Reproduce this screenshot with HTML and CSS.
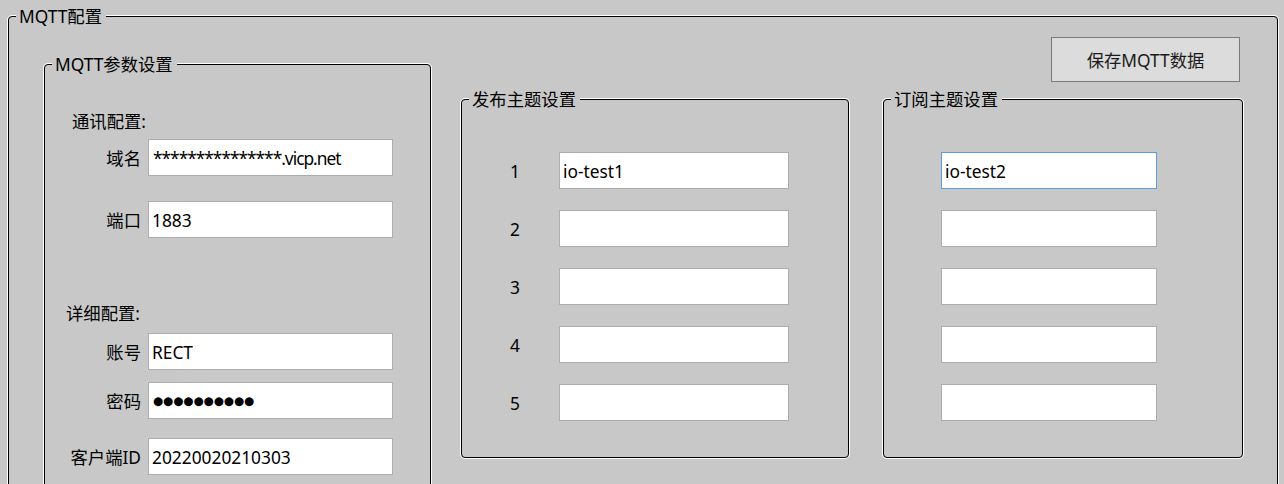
FILE: index.html
```html
<!DOCTYPE html>
<html lang="zh-CN">
<head>
<meta charset="utf-8">
<title>MQTT配置</title>
<link rel="stylesheet" href="styles.css">
</head>
<body>
<div class="window">
  <section class="group outer">
    <div class="legend">MQTT配置</div>
    <div class="outer-body">
      <section class="group params">
        <div class="legend">MQTT参数设置</div>
        <div class="heading h-comm">通讯配置:</div>
        <div class="field f-domain"><label>域名</label><input class="input domain" value="***************.vicp.net" readonly></div>
        <div class="field f-port"><label>端口</label><input class="input" value="1883" readonly></div>
        <div class="heading h-detail">详细配置:</div>
        <div class="field f-user"><label>账号</label><input class="input" value="RECT" readonly></div>
        <div class="field f-pwd"><label>密码</label><input class="input pwd" value="●●●●●●●●●●" readonly></div>
        <div class="field f-client"><label>客户端ID</label><input class="input" value="20220020210303" readonly></div>
      </section>
      <div class="right">
        <div class="toolbar"><button class="btn" type="button">保存MQTT数据</button></div>
        <div class="topics">
          <section class="group publish">
            <div class="legend">发布主题设置</div>
            <div class="topic-list">
              <div class="topic-row"><span class="num">1</span><input class="input" value="io-test1" readonly></div>
              <div class="topic-row"><span class="num">2</span><input class="input" value="" readonly></div>
              <div class="topic-row"><span class="num">3</span><input class="input" value="" readonly></div>
              <div class="topic-row"><span class="num">4</span><input class="input" value="" readonly></div>
              <div class="topic-row"><span class="num">5</span><input class="input" value="" readonly></div>
            </div>
          </section>
          <section class="group subscribe">
            <div class="legend">订阅主题设置</div>
            <div class="topic-list">
              <div class="topic-row"><input class="input focused" value="io-test2" readonly></div>
              <div class="topic-row"><input class="input" value="" readonly></div>
              <div class="topic-row"><input class="input" value="" readonly></div>
              <div class="topic-row"><input class="input" value="" readonly></div>
              <div class="topic-row"><input class="input" value="" readonly></div>
            </div>
          </section>
        </div>
      </div>
    </div>
  </section>
</div>
</body>
</html>
```
FILE: styles.css
```css
html, body {
  margin: 0;
  height: 484px;
  overflow: hidden;
}
body {
  background: #c8c8c8;
  font-family: "Noto Sans", "Noto Sans CJK SC", sans-serif;
  font-size: 17.33px;
  color: #000;
}
.window {
  padding: 16px 0 0 8px;
}
.group {
  border: 1px solid #000;
  border-radius: 4px;
  box-shadow: 0 0 0 1px #fff;
  box-sizing: border-box;
}
.legend {
  width: fit-content;
  height: 20px;
  line-height: 20px;
  margin: -11px 0 0 7px;
  padding: 0 4px 0 3px;
  background: #c8c8c8;
  white-space: nowrap;
}
.outer {
  width: 1270px;
  height: 520px;
}
.outer-body {
  display: flex;
  align-items: flex-start;
  padding-left: 35px;
}
.params {
  width: 387px;
  height: 480px;
  margin-top: 38px;
}
.heading {
  line-height: 20px;
}
.h-comm {
  margin-top: 37px;
  padding-left: 27px;
}
.h-detail {
  margin-top: 65px;
  padding-left: 21px;
}
.field {
  display: flex;
  align-items: center;
  gap: 7px;
}
.field label {
  width: 96px;
  text-align: right;
  line-height: 20px;
}
.f-domain { margin-top: 8px; }
.f-port { margin-top: 25px; }
.f-user { margin-top: 10px; }
.f-pwd { margin-top: 12px; }
.f-client { margin-top: 19px; }
.input {
  width: 245px;
  height: 37px;
  box-sizing: border-box;
  border: 1px solid #adadad;
  background: #fff;
  padding: 0 3px;
  margin: 0;
  font: inherit;
  color: #000;
  outline: none;
}
.input.domain {
  letter-spacing: -1px;
  padding-left: 4px;
}
.input.focused {
  border-color: #5b9de3;
}
.input.pwd {
  font-family: "DejaVu Sans", sans-serif;
  font-size: 11.6px;
  letter-spacing: 0;
  padding-left: 4px;
}
.right {
  margin-left: 30px;
  display: flex;
  flex-direction: column;
}
.toolbar {
  display: flex;
  justify-content: flex-end;
  margin-top: 11px;
  padding-right: 3px;
}
.btn {
  width: 189px;
  height: 45px;
  box-sizing: border-box;
  background: #dcdcdc;
  border: 1px solid #7a7a7a;
  border-radius: 0;
  padding: 0;
  font: inherit;
  color: #1a1a1a;
}
.topics {
  display: flex;
  gap: 34px;
  margin-top: 17px;
}
.publish {
  width: 388px;
  padding-bottom: 36px;
}
.subscribe {
  width: 360px;
}
.topic-list {
  margin-top: 43px;
  display: flex;
  flex-direction: column;
  gap: 21px;
}
.publish .topic-list {
  padding-left: 48px;
}
.subscribe .topic-list {
  padding-left: 57px;
}
.topic-row {
  display: flex;
  align-items: center;
  height: 37px;
}
.num {
  width: 49px;
  line-height: 20px;
}
.publish .input {
  width: 230px;
}
.subscribe .input {
  width: 216px;
}
```
